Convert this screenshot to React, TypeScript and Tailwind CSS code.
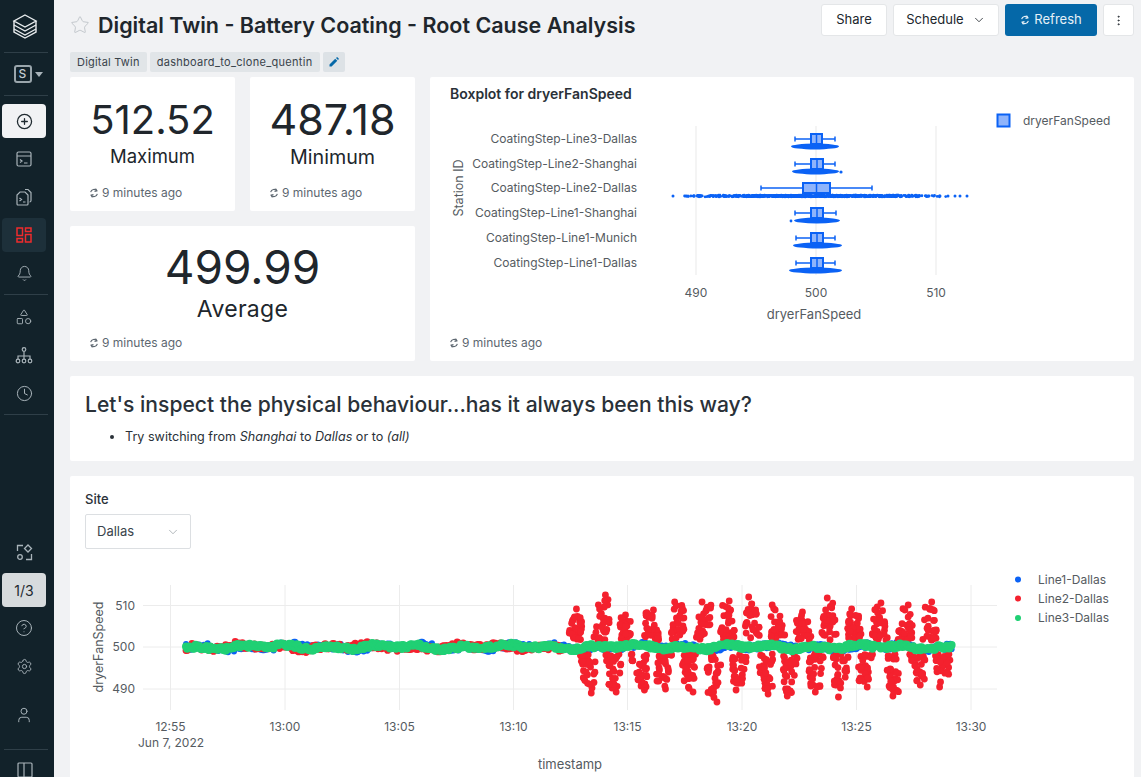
import React from 'react';
import { Bell, ChevronDown, CirclePlus, Clock, CircleHelp, EllipsisVertical, Settings, Shapes, Star, User } from 'lucide-react';

const FONT = 'Inter, "Liberation Sans", sans-serif';

// small seeded random so the scatter is the same on every render
function makeRandom(seed: number) {
  let s = seed;
  return () => {
    s = (s * 16807) % 2147483647;
    return (s - 1) / 2147483646;
  };
}

const SyncIcon = ({ size = 10 }: { size?: number }) => (
  <svg width={size} height={size} viewBox="0 0 12 12" fill="none" stroke="currentColor" strokeWidth="1.4" className="shrink-0">
    <path d="M9.6 3.4A4.3 4.3 0 0 0 2 5" />
    <path d="M2.4 8.6A4.3 4.3 0 0 0 10 7" />
    <path d="M6.6 0.6L8.2 3.2L5.4 3.9" fill="none" transform="translate(1.2 0.2)" />
    <path d="M5.4 11.4L3.8 8.8L6.6 8.1" fill="none" transform="translate(-1.2 -0.2)" />
  </svg>
);

const Divider = () => <div className="h-px bg-[#2f3f48] mx-[2px] w-[44px] shrink-0" />;

const NavItem: React.FC<{ children: React.ReactNode; className?: string }> = ({ children, className }) => (
  <div className={`w-[44px] h-[34px] rounded-[4px] flex items-center justify-center shrink-0 ${className ?? 'text-[#a9b4ba]'}`}>{children}</div>
);

const Sidebar = () => (
  <aside className="w-[54px] h-full shrink-0 bg-[#12222a] flex flex-col items-start pl-[2px]">
    <div className="h-[52px] w-[46px] flex items-center justify-center shrink-0">
      <svg width="26" height="26" viewBox="0 0 26 26" fill="none" stroke="#e8ecee" strokeWidth="1.4">
        <path d="M13 2 L24 8 L13 14 L2 8 Z" />
        <path d="M2 12 L13 18 L24 12" />
        <path d="M2 16 L13 22 L24 16" />
        <path d="M2 8 V12 M24 8 V12 M2 12 V16 M24 12 V16 M2 16 V19 L13 25 L24 19 V16" />
      </svg>
    </div>
    <Divider />
    <div className="h-[42px] w-[46px] flex items-center justify-center pl-[6px] gap-[3px] shrink-0">
      <div className="w-[18px] h-[18px] rounded-[3px] border-2 border-[#9aa6ac] text-[#c4ccd0] text-[12px] font-medium flex items-center justify-center">S</div>
      <svg width="8" height="5" viewBox="0 0 8 5"><path d="M0 0H8L4 5Z" fill="#a9b4ba" /></svg>
    </div>
    <Divider />
    <div className="h-[8px] shrink-0" />
    <NavItem className="bg-[#f1f2f4] text-[#1f2a30]"><CirclePlus size={17} strokeWidth={1.8} /></NavItem>
    <div className="h-[4px] shrink-0" />
    <NavItem>
      <svg width="16" height="16" viewBox="0 0 16 16" fill="none" stroke="currentColor" strokeWidth="1.2">
        <rect x="1" y="1" width="14" height="14" rx="1.5" />
        <path d="M1 5H15M4 8.5L6 10L4 11.5M8 12H11.5" />
      </svg>
    </NavItem>
    <div className="h-[4px] shrink-0" />
    <NavItem>
      <svg width="16" height="18" viewBox="0 0 16 18" fill="none" stroke="currentColor" strokeWidth="1.2">
        <path d="M9 1.5H12L15 4.5V12.5C15 13.5 14.5 14 13.5 14" />
        <path d="M4 4H9L12 7V16A1 1 0 0 1 11 17H2A1 1 0 0 1 1 16V7Z" />
        <path d="M3.5 10L5.5 11.5L3.5 13M7 14H9.5" />
      </svg>
    </NavItem>
    <div className="h-[4px] shrink-0" />
    <NavItem className="bg-[#1d303a]">
      <svg width="16" height="16" viewBox="0 0 16 16" fill="none" stroke="#ef2b2d" strokeWidth="1.5">
        <rect x="1" y="1" width="5.5" height="7.5" />
        <rect x="9.5" y="1" width="5.5" height="3.5" />
        <rect x="1" y="11.5" width="5.5" height="3.5" />
        <rect x="9.5" y="7.5" width="5.5" height="7.5" />
      </svg>
    </NavItem>
    <div className="h-[4px] shrink-0" />
    <NavItem><Bell size={17} strokeWidth={1.3} /></NavItem>
    <div className="h-[4px] shrink-0" />
    <Divider />
    <div className="h-[5px] shrink-0" />
    <NavItem><Shapes size={18} strokeWidth={1.2} /></NavItem>
    <div className="h-[4px] shrink-0" />
    <NavItem>
      <svg width="18" height="17" viewBox="0 0 18 17" fill="none" stroke="currentColor" strokeWidth="1.2">
        <circle cx="9" cy="2.5" r="1.8" />
        <circle cx="3" cy="14" r="1.8" />
        <circle cx="9" cy="14" r="1.8" />
        <circle cx="15" cy="14" r="1.8" />
        <path d="M9 4.5V12M3 12V9H15V12" />
      </svg>
    </NavItem>
    <div className="h-[4px] shrink-0" />
    <NavItem><Clock size={17} strokeWidth={1.4} /></NavItem>
    <div className="h-[4px] shrink-0" />
    <Divider />
    <div className="flex-1" />
    <NavItem>
      <svg width="17" height="17" viewBox="0 0 17 17" fill="none" stroke="currentColor" strokeWidth="1.3">
        <path d="M7 1.5H1.5V7M15.5 10V15.5H10" />
        <path d="M12 1L15.5 4.5L12 8L8.5 4.5Z" />
        <circle cx="4" cy="13" r="2.3" />
      </svg>
    </NavItem>
    <div className="h-[4px] shrink-0" />
    <div className="w-[44px] h-[34px] rounded-[4px] bg-[#d7dbdd] text-[#1f2a30] text-[14px] flex items-center justify-center shrink-0">1/3</div>
    <div className="h-[4px] shrink-0" />
    <NavItem><CircleHelp size={18} strokeWidth={1.3} /></NavItem>
    <div className="h-[4px] shrink-0" />
    <NavItem><Settings size={17} strokeWidth={1.3} /></NavItem>
    <div className="h-[15px] shrink-0" />
    <NavItem><User size={18} strokeWidth={1.3} /></NavItem>
    <div className="h-[17px] shrink-0" />
    <Divider />
    <div className="h-[27px] w-[46px] flex justify-center pt-[12px] shrink-0">
      <svg width="16" height="16" viewBox="0 0 16 16" fill="none" stroke="#a9b4ba" strokeWidth="1.2" className="shrink-0">
        <rect x="1" y="1" width="14" height="14" rx="1" />
        <path d="M7 1V15" />
      </svg>
    </div>
  </aside>
);

const Ago = ({ className }: { className?: string }) => (
  <div className={`flex items-center gap-[3px] text-[12px] leading-[16px] text-[#5d6770] ${className ?? ''}`}>
    <SyncIcon />
    <span>9 minutes ago</span>
  </div>
);

const Counter: React.FC<{ value: string; label: string; valueClass: string; labelClass: string; padClass: string; className?: string }> = ({ value, label, valueClass, labelClass, padClass, className }) => (
  <div className={`bg-white rounded-[2px] flex flex-col pl-[19px] pb-[10px] ${className ?? ''}`}>
    <div className={`flex-1 flex flex-col items-center pr-[19px] text-[#20262c] ${padClass}`}>
      <div className={valueClass}>{value}</div>
      <div className={labelClass}>{label}</div>
    </div>
    <Ago />
  </div>
);

const BLUE = '#0b62f5';

const stations = [
  { name: 'CoatingStep-Line3-Dallas', y: 139, q1: 811, q3: 822, lo: 795, hi: 835, dot: [791, 839] },
  { name: 'CoatingStep-Line2-Shanghai', y: 164, q1: 811, q3: 823, lo: 795, hi: 835, dot: [792, 839] },
  { name: 'CoatingStep-Line2-Dallas', y: 188, q1: 803, q3: 830, lo: 761, hi: 872, dot: [685, 950] },
  { name: 'CoatingStep-Line1-Shanghai', y: 213, q1: 811, q3: 823, lo: 795, hi: 836, dot: [794, 840] },
  { name: 'CoatingStep-Line1-Munich', y: 238, q1: 811, q3: 823, lo: 796, hi: 835, dot: [793, 842] },
  { name: 'CoatingStep-Line1-Dallas', y: 263, q1: 811, q3: 823, lo: 796, hi: 835, dot: [789, 842] },
];

const boxDots = () => {
  const r = makeRandom(77);
  const out: { x: number; y: number; r: number }[] = [];
  for (let i = 0; i < 900; i++) {
    const u = (r() + r()) / 2;
    out.push({ x: 680 + u * 272, y: 196 + (r() - 0.5) * 1.6, r: 1.4 });
  }
  [673, 686, 688, 694, 940, 948, 955, 960, 967].forEach((x) => out.push({ x, y: 196, r: 1.5 }));
  return out;
};

const Boxplot = () => {
  const dots = boxDots();
  return (
    <svg width="704" height="284" viewBox="430 77 704 284" className="absolute left-0 top-0" style={{ fontFamily: FONT }}>
      {[696, 816, 936].map((x) => <line key={x} x1={x} x2={x} y1={126} y2={275} stroke="#e9e9e9" />)}
      {stations.map((s) => (
        <g key={s.name}>
          <text x={637} y={s.y + 4} textAnchor="end" fontSize="12" fill="#555b61">{s.name}</text>
          {s.name !== 'CoatingStep-Line2-Dallas' && (
            <ellipse cx={(s.dot[0] + s.dot[1]) / 2} cy={s.y + 7.5} rx={(s.dot[1] - s.dot[0]) / 2} ry={3} fill={BLUE} />
          )}
          <line x1={s.lo} x2={s.hi} y1={s.y} y2={s.y} stroke={BLUE} strokeWidth="1.5" />
          <line x1={s.lo} x2={s.lo} y1={s.y - 2.5} y2={s.y + 2.5} stroke={BLUE} strokeWidth="1.5" />
          <line x1={s.hi} x2={s.hi} y1={s.y - 2.5} y2={s.y + 2.5} stroke={BLUE} strokeWidth="1.5" />
          <rect x={s.q1} y={s.y - 5} width={s.q3 - s.q1} height={10} fill="#8fb4fb" stroke={BLUE} strokeWidth="2" />
          <line x1={(s.q1 + s.q3) / 2} x2={(s.q1 + s.q3) / 2} y1={s.y - 5} y2={s.y + 5} stroke={BLUE} strokeWidth="1.5" />
        </g>
      ))}
      {dots.map((d, i) => <circle key={i} cx={d.x} cy={d.y} r={d.r} fill={BLUE} />)}
      <circle cx={841} cy={172} r={1.6} fill={BLUE} />
      <circle cx={791} cy={221} r={1.4} fill={BLUE} />
      {[[696, '490'], [816, '500'], [936, '510']].map(([x, t]) => (
        <text key={t as string} x={x as number} y={297} textAnchor="middle" fontSize="12" fill="#555b61">{t}</text>
      ))}
      <text x={814} y={319} textAnchor="middle" fontSize="13" fill="#555b61">dryerFanSpeed</text>
      <text transform="translate(463 188) rotate(-90)" textAnchor="middle" fontSize="12.5" fill="#555b61">Station ID</text>
      <rect x={997.5} y={114.5} width={12} height={12} fill="#8fb4fb" stroke={BLUE} strokeWidth="2" />
      <text x={1023} y={125} fontSize="12" fill="#555b61">dryerFanSpeed</text>
    </svg>
  );
};

// how far each Line2 burst reaches, read off the reference
const PEAKS = [609, 595, 615, 610, 602, 602, 601, 597, 605, 612, 598, 609, 603, 605, 602];
const LOWS = [693, 692, 690, 689, 692, 702, 690, 694, 696, 692, 697, 687, 696, 685, 687];

const scatter = () => {
  const r = makeRandom(4242);
  const blue: number[][] = [];
  const red: number[][] = [];
  const green: number[][] = [];
  const wob = (x: number, p: number) => Math.sin(x / 7 + p) * 1.4 + Math.sin(x / 19 + p * 2) * 1.2;
  for (let x = 186; x <= 952; x += 1.2) {
    blue.push([x, 647 + wob(x, 1) + (r() - 0.5) * 6.5]);
    if (x < 566) red.push([x, 647 + wob(x, 2.3) + (r() - 0.5) * 6.5]);
    green.push([x, 647 + wob(x, 1.5) + (r() - 0.5) * 4.5]);
  }
  // Line2 swings between high and low once it goes wrong, one burst every ~25px
  PEAKS.forEach((peak, i) => {
    const topX = 576 + i * 25.3;
    const botX = 588 + i * 25.3;
    const lean = (r() - 0.5) * 8;
    const lean2 = (r() - 0.5) * 8;
    const low = LOWS[i];
    for (let k = 0; k < 30; k++) {
      const v = k === 0 ? 1 : Math.pow(r(), 1.3) * 0.92;
      const t = (r() - 0.5) * 16 * (1 - 0.4 * v) + lean * v;
      red.push([Math.min(951, topX + t), 640 - v * (640 - peak)]);
      const v2 = k === 0 ? 1 : Math.pow(r(), 1.3) * 0.92;
      const t2 = (r() - 0.5) * 16 * (1 - 0.4 * v2) + lean2 * v2;
      red.push([Math.min(951, botX + t2), 654 + v2 * (low - 654)]);
    }
  });
  return { blue, red, green };
};

const SpeedChart = () => {
  const { blue, red, green } = scatter();
  const ticks: [number, string][] = [[170.5, '12:55'], [285, '13:00'], [399.5, '13:05'], [513.5, '13:10'], [627.5, '13:15'], [742, '13:20'], [856.5, '13:25'], [971, '13:30']];
  return (
    <svg width="1064" height="213" viewBox="70 564 1064 213" className="absolute left-0 top-[88px]" style={{ fontFamily: FONT }}>
      {[605.5, 647, 689].map((y) => <line key={y} x1={143} x2={997} y1={y} y2={y} stroke="#ececec" />)}
      {ticks.map(([x]) => <line key={x} x1={x} x2={x} y1={585} y2={710} stroke="#ececec" />)}
      {blue.map((p, i) => <circle key={`b${i}`} cx={p[0]} cy={p[1]} r={3} fill={BLUE} />)}
      {red.map((p, i) => <circle key={`r${i}`} cx={p[0]} cy={p[1]} r={3.4} fill="#f4212e" />)}
      {green.map((p, i) => <circle key={`g${i}`} cx={p[0]} cy={p[1]} r={4} fill="#20d074" />)}
      {[[605.5, '510'], [647, '500'], [689, '490']].map(([y, t]) => (
        <text key={t as string} x={135} y={(y as number) + 4} textAnchor="end" fontSize="12" fill="#555b61">{t}</text>
      ))}
      {ticks.map(([x, t]) => <text key={t} x={x} y={731} textAnchor="middle" fontSize="12" fill="#555b61">{t}</text>)}
      <text x={171} y={747} textAnchor="middle" fontSize="12" fill="#555b61">Jun 7, 2022</text>
      <text x={570} y={769} textAnchor="middle" fontSize="13" fill="#555b61">timestamp</text>
      <text transform="translate(103 647) rotate(-90)" textAnchor="middle" fontSize="12.5" fill="#555b61">dryerFanSpeed</text>
      {[[579.5, BLUE, 'Line1-Dallas'], [598.5, '#f4212e', 'Line2-Dallas'], [618, '#20d074', 'Line3-Dallas']].map(([y, c, t]) => (
        <g key={t as string}>
          <circle cx={1018} cy={y as number} r={3} fill={c as string} />
          <text x={1038} y={(y as number) + 4} fontSize="12" fill="#555b61">{t}</text>
        </g>
      ))}
    </svg>
  );
};

const App: React.FC = () => {
  return (
    <div className="w-[1141px] h-[777px] overflow-hidden flex bg-[#f1f2f4] text-[#20262c]" style={{ fontFamily: FONT }}>
      <Sidebar />
      <main className="flex-1 min-w-0 flex flex-col pl-[16px] pr-[7px]">

        {/* Title row */}
        <div className="h-[47px] shrink-0 flex items-center justify-between pt-[3px]">
          <div className="flex items-center">
            <Star size={20} strokeWidth={1} className="text-[#b9bfc4] mr-[8px]" />
            <h1 className="text-[21.5px] font-semibold leading-[30px] text-[#20262c]">Digital Twin - Battery Coating - Root Cause Analysis</h1>
          </div>
          <div className="flex items-center gap-[6px] text-[13px] -mt-[10px]">
            <button className="h-[32px] w-[66px] bg-white rounded-[3px] border border-[#e4e6e8]">Share</button>
            <button className="h-[32px] w-[106px] bg-white rounded-[3px] border border-[#e4e6e8] flex items-center justify-center gap-[8px]">Schedule <ChevronDown size={14} strokeWidth={1.4} /></button>
            <button className="h-[32px] w-[92px] bg-[#0568a8] text-[#e6f0f7] rounded-[3px] flex items-center justify-center gap-[4px]"><SyncIcon /> Refresh</button>
            <button className="h-[32px] w-[31px] bg-white rounded-[3px] border border-[#e4e6e8] flex items-center justify-center"><EllipsisVertical size={13} strokeWidth={1.5} /></button>
          </div>
        </div>

        {/* Tags */}
        <div className="h-[30px] shrink-0 flex items-start gap-[3px] pt-[5px] text-[11px] text-[#39434b]">
          <span className="h-[20px] px-[7px] bg-[#e1e5e8] rounded-[2px] flex items-center tracking-[0.2px]">Digital Twin</span>
          <span className="h-[20px] w-[170px] justify-center bg-[#e1e5e8] rounded-[2px] flex items-center tracking-[0.3px]">dashboard_to_clone_quentin</span>
          <span className="h-[20px] w-[22px] bg-[#dde2e6] rounded-[2px] flex items-center justify-center text-[#0568a8]">
            <svg width="10" height="10" viewBox="0 0 10 10" fill="currentColor"><path d="M0.5 9.5V7.4L6.2 1.7L8.3 3.8L2.6 9.5Z M7 1L7.8 0.3C8 0.1 8.3 0.1 8.5 0.3L9.7 1.5C9.9 1.7 9.9 2 9.7 2.2L9 3Z" /></svg>
          </span>
        </div>

        <div className="flex flex-col gap-[15px] shrink-0">
          {/* Top row */}
          <div className="flex gap-[15px] h-[284px]">
            <div className="w-[345px] flex flex-col gap-[15px]">
              <div className="flex gap-[15px] h-[134px]">
                <Counter value="512.52" label="Maximum" padClass="pt-[17px]" valueClass="text-[40px] leading-[52px]" labelClass="text-[18.5px] leading-[20px]" className="w-[165px]" />
                <Counter value="487.18" label="Minimum" padClass="pt-[16px]" valueClass="text-[43px] leading-[52px]" labelClass="text-[19.7px] leading-[24px]" className="w-[165px]" />
              </div>
              <Counter value="499.99" label="Average" padClass="pt-[13px]" valueClass="text-[46px] leading-[56px]" labelClass="text-[23px] leading-[28px] tracking-[0.3px]" className="h-[135px]" />
            </div>
            <div className="flex-1 bg-white rounded-[2px] relative">
              <Boxplot />
              <div className="relative pl-[20px] pt-[8px] text-[14px] leading-[18px] font-semibold text-[#2a3138]">Boxplot for dryerFanSpeed</div>
              <Ago className="absolute left-[19px] bottom-[10px]" />
            </div>
          </div>

          {/* Markdown card */}
          <div className="h-[85px] bg-white rounded-[2px] pl-[15px] pt-[15px]">
            <h2 className="text-[21.1px] leading-[28px] font-medium text-[#2a3138]">Let's inspect the physical behaviour...has it always been this way?</h2>
            <ul className="list-disc pl-[40px] mt-[9px] text-[12.6px] leading-[18px] text-[#2a3138]">
              <li>Try switching from <em>Shanghai</em> to <em>Dallas</em> or to <em>(all)</em></li>
            </ul>
          </div>

          {/* Site chart */}
          <div className="h-[320px] bg-white rounded-[2px] relative pl-[15px] pt-[14px]">
            <div className="text-[13px] leading-[18px] font-medium text-[#2a3138]">Site</div>
            <div className="mt-[6px] w-[106px] h-[35px] border border-[#dcdfe2] rounded-[2px] flex items-center justify-between pl-[11px] pr-[10px] text-[13px] text-[#3a444c]">
              Dallas <ChevronDown size={14} strokeWidth={1} className="text-[#7a848c]" />
            </div>
            <SpeedChart />
          </div>
        </div>
      </main>
    </div>
  );
};

export default App;
